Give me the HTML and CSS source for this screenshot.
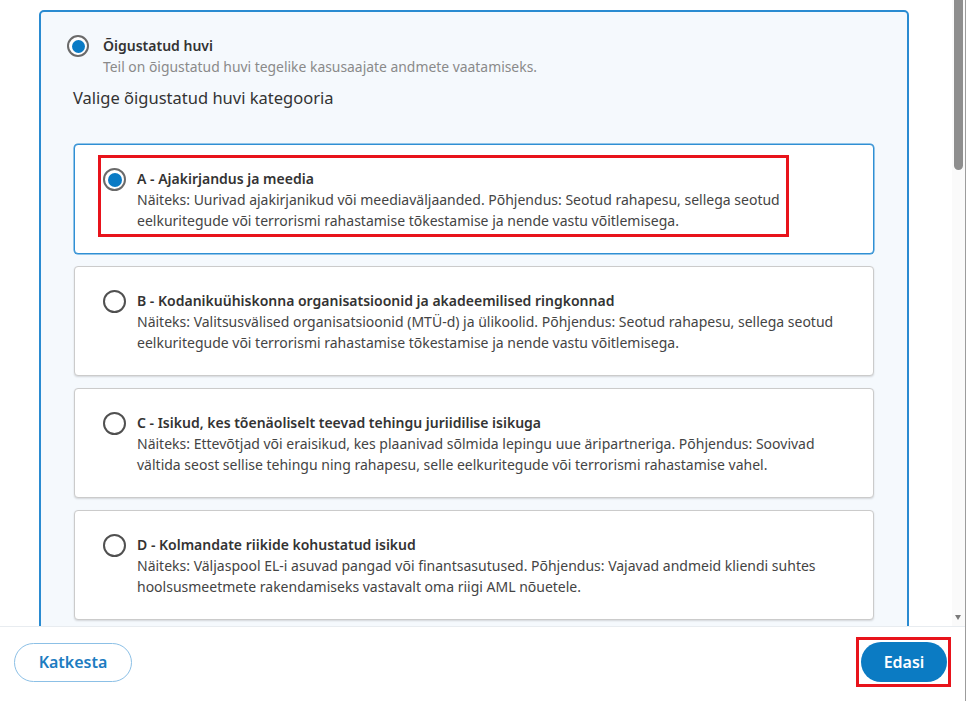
FILE: index.html
```html
<!DOCTYPE html>
<html lang="et">
<head>
<meta charset="utf-8">
<title>Õigustatud huvi</title>
<link rel="stylesheet" href="styles.css">
</head>
<body>
<div class="frame">
  <div class="viewport">
    <div class="scroller">
      <section class="panel">
        <div class="main-option">
          <span class="radio radio--main is-checked"></span>
          <div class="main-option__text">
            <div class="main-option__title">Õigustatud huvi</div>
            <div class="main-option__hint">Teil on õigustatud huvi tegelike kasusaajate andmete vaatamiseks.</div>
          </div>
        </div>

        <h2 class="group-title">Valige õigustatud huvi kategooria</h2>

        <div class="choices">
          <div class="choice is-selected">
            <span class="radio is-checked"></span>
            <div class="choice__body">
              <div class="choice__title">A - Ajakirjandus ja meedia</div>
              <div class="choice__desc">Näiteks: Uurivad ajakirjanikud või meediaväljaanded. Põhjendus: Seotud rahapesu, sellega seotud eelkuritegude või terrorismi rahastamise tõkestamise ja nende vastu võitlemisega.</div>
            </div>
            <span class="mark mark--choice"></span>
          </div>

          <div class="choice">
            <span class="radio"></span>
            <div class="choice__body">
              <div class="choice__title">B - Kodanikuühiskonna organisatsioonid ja akadeemilised ringkonnad</div>
              <div class="choice__desc">Näiteks: Valitsusvälised organisatsioonid (MTÜ-d) ja ülikoolid. Põhjendus: Seotud rahapesu, sellega seotud eelkuritegude või terrorismi rahastamise tõkestamise ja nende vastu võitlemisega.</div>
            </div>
          </div>

          <div class="choice">
            <span class="radio"></span>
            <div class="choice__body">
              <div class="choice__title">C - Isikud, kes tõenäoliselt teevad tehingu juriidilise isikuga</div>
              <div class="choice__desc">Näiteks: Ettevõtjad või eraisikud, kes plaanivad sõlmida lepingu uue äripartneriga. Põhjendus: Soovivad vältida seost sellise tehingu ning rahapesu, selle eelkuritegude või terrorismi rahastamise vahel.</div>
            </div>
          </div>

          <div class="choice">
            <span class="radio"></span>
            <div class="choice__body">
              <div class="choice__title">D - Kolmandate riikide kohustatud isikud</div>
              <div class="choice__desc">Näiteks: Väljaspool EL-i asuvad pangad või finantsasutused. Põhjendus: Vajavad andmeid kliendi suhtes hoolsusmeetmete rakendamiseks vastavalt oma riigi AML nõuetele.</div>
            </div>
          </div>
        </div>
      </section>
    </div>

    <div class="scrollbar">
      <div class="scrollbar__thumb"></div>
      <div class="scrollbar__arrow"></div>
    </div>
  </div>

  <footer class="actions">
    <button class="btn btn--ghost" type="button">Katkesta</button>
    <div class="btn-wrap">
      <button class="btn btn--primary" type="button">Edasi</button>
      <span class="mark mark--button"></span>
    </div>
  </footer>
</div>
</body>
</html>
```

FILE: styles.css
```css
* {
  box-sizing: border-box;
}

html,
body {
  margin: 0;
  padding: 0;
  background: #ffffff;
}

body {
  font-family: "Noto Sans", "Open Sans", "Liberation Sans", sans-serif;
  color: #333333;
  width: 972px;
  height: 701px;
  overflow: hidden;
}

/* window frame with the thin grey edge on the right */
.frame {
  width: 966px;
  height: 701px;
  border-right: 1.5px solid #9c9c9c;
  display: flex;
  flex-direction: column;
}

.viewport {
  height: 627px;
  display: flex;
  border-bottom: 1px solid #e8ecf0;
}

.scroller {
  flex: 1;
  overflow: hidden;
  padding: 10px 43px 0 39px;
}

/* outer selected option panel */
.panel {
  border: 2px solid #2a8bd1;
  border-radius: 5px;
  background: #f5f9fd;
  padding: 23px 33px 40px;
  min-height: 700px;
}

.main-option {
  display: flex;
  align-items: flex-start;
  gap: 14px;
  margin-left: -7px;
}

.main-option__title {
  font-size: 14px;
  font-weight: 600;
  line-height: 22px;
  color: #333333;
}

.main-option__hint {
  font-size: 13.9px;
  line-height: 20px;
  color: #8a8a8a;
}

.group-title {
  margin: 9px 0 34px -1px;
  font-size: 16.5px;
  font-weight: 400;
  line-height: 24px;
  color: #333333;
}

/* radio buttons */
.radio {
  flex: none;
  width: 23px;
  height: 23px;
  border: 2px solid #505050;
  border-radius: 50%;
  background: #ffffff;
  position: relative;
}

.radio--main {
  width: 22px;
  height: 22px;
  border-color: #5a5a5a;
}

.radio.is-checked {
  border-color: #6a6a6a;
}

.radio.is-checked::after {
  content: "";
  position: absolute;
  inset: 2.5px;
  border-radius: 50%;
  background: #0a7bc5;
}

/* category cards */
.choices {
  display: flex;
  flex-direction: column;
  gap: 12px;
}

.choice {
  position: relative;
  height: 110px;
  display: flex;
  align-items: flex-start;
  gap: 11px;
  padding: 23px 24px 22px 28px;
  background: #ffffff;
  border: 1px solid #cbcbcb;
  border-radius: 4px;
  box-shadow: 0 1px 2px rgba(0, 0, 0, 0.14);
}

.choice.is-selected {
  border-color: #2f8fd4;
  box-shadow: 0 0 0 0.5px #2f8fd4;
}

.choice__body {
  flex: 1;
  min-width: 0;
}

.choice__title {
  font-size: 14px;
  font-weight: 600;
  line-height: 21px;
  color: #333333;
}

.choice__desc {
  font-size: 14px;
  line-height: 21px;
  color: #444444;
}

/* red highlight frames */
.mark {
  position: absolute;
  border: 3px solid #e8131b;
  pointer-events: none;
}

.mark--choice {
  left: 23px;
  top: 10px;
  width: 691px;
  height: 82px;
}

.mark--button {
  inset: -5px -4px -5px -5px;
}

/* scrollbar column */
.scrollbar {
  width: 13px;
  flex: none;
  background: #fafafa;
  position: relative;
}

.scrollbar__thumb {
  position: absolute;
  left: 2px;
  top: 0;
  width: 9px;
  height: 170px;
  border-radius: 0 0 5px 5px;
  background: #8e8e8e;
}

.scrollbar__arrow {
  position: absolute;
  left: 3px;
  bottom: 6px;
  width: 0;
  height: 0;
  border-left: 3.5px solid transparent;
  border-right: 3.5px solid transparent;
  border-top: 5px solid #7a7a7a;
}

/* footer buttons */
.actions {
  flex: 1;
  display: flex;
  align-items: center;
  justify-content: space-between;
  padding: 0 18px 4px 14px;
  background: #ffffff;
}

.btn {
  font-family: "Noto Sans", "Open Sans", "Liberation Sans", sans-serif;
  font-size: 16px;
  font-weight: 600;
  height: 40px;
  border-radius: 20px;
  cursor: pointer;
}

.btn--ghost {
  width: 118px;
  height: 39px;
  background: #ffffff;
  color: #1d7cc1;
  border: 1.5px solid #8cc0e6;
}

.btn-wrap {
  position: relative;
}

.btn--primary {
  display: block;
  width: 86px;
  background: #0b7bc3;
  color: #ffffff;
  border: none;
}
```
